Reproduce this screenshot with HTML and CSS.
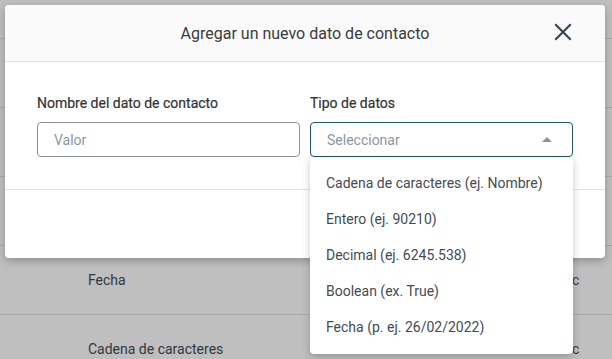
FILE: index.html
```html
<!DOCTYPE html>
<html lang="es">
<head>
<meta charset="utf-8">
<title>Agregar dato de contacto</title>
<link rel="stylesheet" href="styles.css">
</head>
<body>
<div class="page">
  <div class="table">
    <div class="row head"><span class="c1"></span><span class="c2">Formato</span></div>
    <div class="row"><span class="c1">Texto</span><span class="c2">Abc</span></div>
    <div class="row"><span class="c1">Número</span><span class="c2">Abc</span></div>
    <div class="row"><span class="c1">Decimal</span><span class="c2">Abc</span></div>
    <div class="row"><span class="c1">Fecha</span><span class="c2">Abc</span></div>
    <div class="row"><span class="c1">Cadena de caracteres</span><span class="c2">Abc</span></div>
  </div>
  <div class="backdrop"></div>
  <div class="modal">
    <div class="modal-header">
      <h2 class="title">Agregar un nuevo dato de contacto</h2>
      <button class="close" aria-label="Cerrar">
        <svg width="18" height="18" viewBox="0 0 18 18"><path d="M2 2 L16 16 M16 2 L2 16" stroke="#37474f" stroke-width="2.2" stroke-linecap="square"/></svg>
      </button>
    </div>
    <div class="modal-body">
      <div class="field">
        <label class="label">Nombre del dato de contacto</label>
        <div class="input"><span class="ph">Valor</span></div>
      </div>
      <div class="field">
        <label class="label">Tipo de datos</label>
        <div class="input select"><span class="ph">Seleccionar</span><span class="caret"></span></div>
      </div>
    </div>
    <div class="modal-footer"></div>
  </div>
  <ul class="menu">
    <li>Cadena de caracteres (ej. Nombre)</li>
    <li>Entero (ej. 90210)</li>
    <li>Decimal (ej. 6245.538)</li>
    <li>Boolean (ex. True)</li>
    <li>Fecha (p. ej. 26/02/2022)</li>
  </ul>
</div>
</body>
</html>
```
FILE: styles.css
```css
* { box-sizing: border-box; }
html, body { margin: 0; padding: 0; }
body {
  width: 612px;
  height: 359px;
  overflow: hidden;
  font-family: Roboto, "Liberation Sans", Arial, sans-serif;
  background: #fff;
}
.page { position: relative; width: 612px; height: 359px; overflow: hidden; }

.table { display: flex; flex-direction: column; }
.row {
  height: 69px;
  display: flex;
  align-items: center;
  border-bottom: 1px solid #e2e2e2;
  font-size: 14px;
  color: #444b52;
  white-space: nowrap;
}
.row.head { height: 39px; font-weight: 500; }
.c1 { margin-left: 88px; width: 467px; }
.c2 { margin-left: 0; }
.row.head .c2 { margin-left: -17px; }

.backdrop {
  position: absolute;
  inset: 0;
  background: rgba(0, 0, 0, 0.25);
}

.modal {
  position: absolute;
  left: 5px;
  top: 5px;
  width: 600px;
  height: 253px;
  background: #fff;
  border-radius: 4px;
  box-shadow: 0 3px 8px rgba(0,0,0,0.25);
  display: flex;
  flex-direction: column;
  overflow: hidden;
}
.modal-header {
  height: 57px;
  background: #fafafa;
  border-bottom: 1px solid #e3e3e3;
  display: flex;
  align-items: center;
  justify-content: center;
  position: relative;
}
.title {
  margin: 0;
  font-size: 16px;
  font-weight: 400;
  color: #3a3a3a;
}
.close {
  position: absolute;
  right: 33px;
  top: 18px;
  border: 0;
  background: none;
  padding: 0;
  width: 18px;
  height: 18px;
  display: block;
}
.close svg { display: block; }

.modal-body {
  display: grid;
  grid-template-columns: 263px 263px;
  column-gap: 10px;
  padding: 31px 32px 32px;
  border-bottom: 1px solid #e3e3e3;
}
.field { display: flex; flex-direction: column; }
.label {
  font-size: 14px;
  font-weight: 400;
  line-height: 20px;
  color: #333;
  margin-bottom: 9px;
  -webkit-text-stroke: 0.2px #333;
}
.input {
  height: 35px;
  border: 1px solid #8d9297;
  border-radius: 4px;
  display: flex;
  align-items: center;
  padding: 0 16px;
  font-size: 14px;
}
.ph { color: #8b97a0; }
.select { border-color: #1e5b64; justify-content: space-between; }
.caret {
  width: 0; height: 0;
  border-left: 5px solid transparent;
  border-right: 5px solid transparent;
  border-bottom: 5px solid #8a939b;
  margin-right: 4px;
}
.modal-footer { flex: 1; }

.menu {
  position: absolute;
  left: 310px;
  top: 157px;
  width: 263px;
  margin: 0;
  padding: 8px 0 9px;
  list-style: none;
  background: #fff;
  border-radius: 0 0 4px 4px;
  box-shadow: 0 3px 8px rgba(0,0,0,0.22);
}
.menu li {
  height: 36px;
  line-height: 36px;
  padding-left: 16px;
  font-size: 14px;
  color: #454b52;
  white-space: nowrap;
}
```
